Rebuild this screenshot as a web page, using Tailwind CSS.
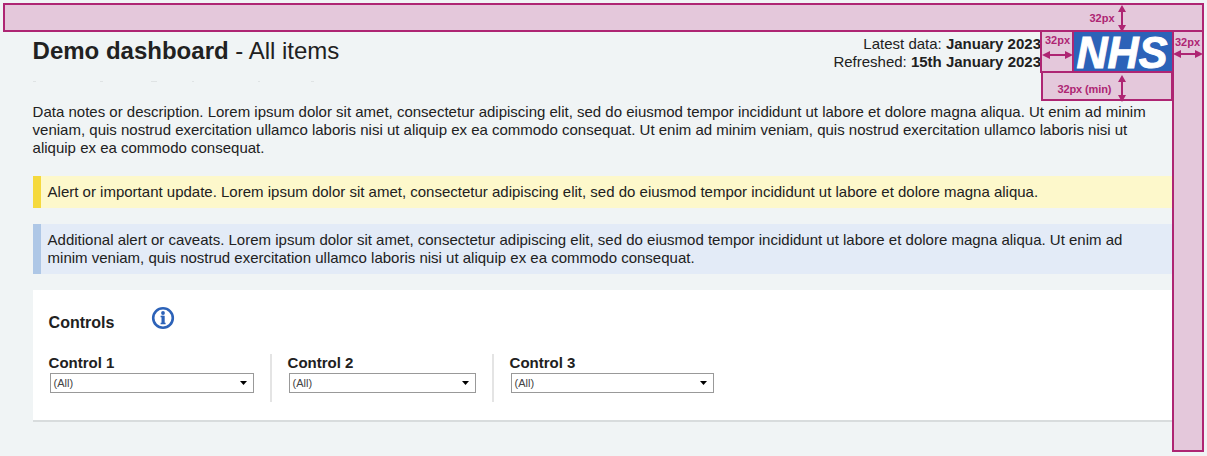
<!DOCTYPE html>
<html lang="en">
<head>
<meta charset="utf-8">
<title>Demo dashboard</title>
<script src="https://cdn.jsdelivr.net/npm/@tailwindcss/browser@4"></script>
</head>
<body class="relative h-[456px] w-[1207px] overflow-hidden bg-[#f0f4f5] pt-8 pr-[34px] pl-[32.6px] font-['Liberation_Sans',Arial,sans-serif] text-[15px] leading-[18px] text-[#212121]">
  <header class="flex h-[71px] items-start justify-between">
    <h1 class="pt-[4px] text-[24px] leading-[30px] whitespace-nowrap"><b>Demo dashboard</b> - All items</h1>
    <div class="flex">
      <div class="pt-[3px] pr-8 text-right whitespace-nowrap">
        <p>Latest data: <b>January 2023</b></p>
        <p>Refreshed: <b>15th January 2023</b></p>
      </div>
      <svg class="h-[40px] w-[100px] overflow-visible" viewBox="0 0 100 40" role="img" aria-label="NHS">
        <rect width="100" height="40" fill="#2c62b8"/>
        <text x="3.5" y="36.2" textLength="91" lengthAdjust="spacingAndGlyphs" font-family="Liberation Sans" font-weight="700" font-style="italic" font-size="45" fill="#fff" stroke="#fff" stroke-width="1">NHS</text>
      </svg>
    </div>
  </header>
  <main class="whitespace-nowrap">
    <p>Data notes or description. Lorem ipsum dolor sit amet, consectetur adipiscing elit, sed do eiusmod tempor incididunt ut labore et dolore magna aliqua. Ut enim ad minim<br>veniam, quis nostrud exercitation ullamco laboris nisi ut aliquip ex ea commodo consequat. Ut enim ad minim veniam, quis nostrud exercitation ullamco laboris nisi ut<br>aliquip ex ea commodo consequat.</p>
    <p class="mt-[19px] h-8 border-l-8 border-[#f5d93d] bg-[#fdf8cb] py-[7px] pl-[7px]">Alert or important update. Lorem ipsum dolor sit amet, consectetur adipiscing elit, sed do eiusmod tempor incididunt ut labore et dolore magna aliqua.</p>
    <p class="mt-4 h-[50px] border-l-8 border-[#aec7e6] bg-[#e3ebf7] py-[7px] pl-[7px]">Additional alert or caveats. Lorem ipsum dolor sit amet, consectetur adipiscing elit, sed do eiusmod tempor incididunt ut labore et dolore magna aliqua. Ut enim ad<br>minim veniam, quis nostrud exercitation ullamco laboris nisi ut aliquip ex ea commodo consequat.</p>
    <section class="mt-4 h-[132px] border-b-2 border-[#d8dcdd] bg-white px-4 pt-4">
      <div class="flex h-12 items-start">
        <h2 class="w-[102.4px] pt-[8px] text-[16px] font-bold">Controls</h2>
        <svg class="h-6 w-6" viewBox="0 0 24 24" fill="none" stroke="#2c62b8">
          <circle cx="12" cy="12" r="9.8" stroke-width="2.6"/>
          <circle cx="12" cy="7" r="1.9" fill="#2c62b8" stroke="none"/>
          <path d="M9.6 10.5H12.7M9.6 17.5H14.6" stroke-width="1.4"/><path d="M12.1 9.8V18" stroke-width="3.2"/>
        </svg>
      </div>
      <div class="flex h-12">
        <div class="w-[223px] border-r-2 border-[#e4e4e4]"><h3 class="font-bold">Control 1</h3><div class="mt-px ml-px flex h-5 w-[204px] items-center justify-between border border-[#999] px-[3px] text-[11px] text-[#444]">(All)<svg class="mr-[3px] h-1 w-[7px]" viewBox="0 0 7 4"><path d="M0 0H7L3.5 4Z" fill="#000"/></svg></div></div>
        <div class="w-[222px] border-r-2 border-[#e4e4e4] pl-4"><h3 class="font-bold">Control 2</h3><div class="mt-px ml-px flex h-5 w-[187px] items-center justify-between border border-[#999] px-[3px] text-[11px] text-[#444]">(All)<svg class="mr-[3px] h-1 w-[7px]" viewBox="0 0 7 4"><path d="M0 0H7L3.5 4Z" fill="#000"/></svg></div></div>
        <div class="pl-4"><h3 class="font-bold">Control 3</h3><div class="mt-px ml-px flex h-5 w-[203px] items-center justify-between border border-[#999] px-[3px] text-[11px] text-[#444]">(All)<svg class="mr-[3px] h-1 w-[7px]" viewBox="0 0 7 4"><path d="M0 0H7L3.5 4Z" fill="#000"/></svg></div></div>
      </div>
    </section>
  </main>

  <!-- Spacing measurements laid over the dashboard -->
  <div class="absolute top-[3px] left-[3px] h-[29px] w-[1201px] border-2 border-[#ae2573] bg-[#e4c8db]"></div>
  <div class="absolute top-[30px] left-[1040px] h-[43px] w-[34px] border-2 border-[#ae2573] bg-[#e4c8db]"></div>
  <div class="absolute top-[71px] left-[1041px] h-[30px] w-[132px] border-2 border-[#ae2573] bg-[#e4c8db]"></div>
  <div class="absolute top-[30px] left-[1172px] h-[422px] w-[32px] border-2 border-[#ae2573] bg-[#e4c8db]"></div>
  <svg class="absolute top-0 left-0 h-[110px] w-[1207px]" viewBox="0 0 1207 110" fill="#ae2573" font-family="Liberation Sans" font-weight="700" font-size="11">
    <path d="M33 81h3v1h-3zM100 81h3v1h-3zM151 81h6v1h-6zM192 81h2v1h-2zM258 81h2v1h-2zM311 81h3v1h-3z" fill="#dfe3e4"/>
    <path d="M1121 10h2v17h-2z"/><path d="M1122 5l4 7h-8zM1122 32l4-7h-8z"/>
    <path d="M1121 80h2v17h-2z"/><path d="M1122 75l4 7h-8zM1122 102l4-7h-8z"/>
    <path d="M1048 54h20v2h-20z"/><path d="M1042 55l8-4v8zM1073 55l-8-4v8z"/>
    <path d="M1178 53h20v2h-20z"/><path d="M1173 54l8-4v8zM1203 54l-8-4v8z"/>
    <text x="1089.5" y="22" textLength="25">32px</text>
    <text x="1045" y="44" textLength="25">32px</text>
    <text x="1175" y="46" textLength="25">32px</text>
    <text x="1057.5" y="93" textLength="54">32px (min)</text>
  </svg>
</body>
</html>
